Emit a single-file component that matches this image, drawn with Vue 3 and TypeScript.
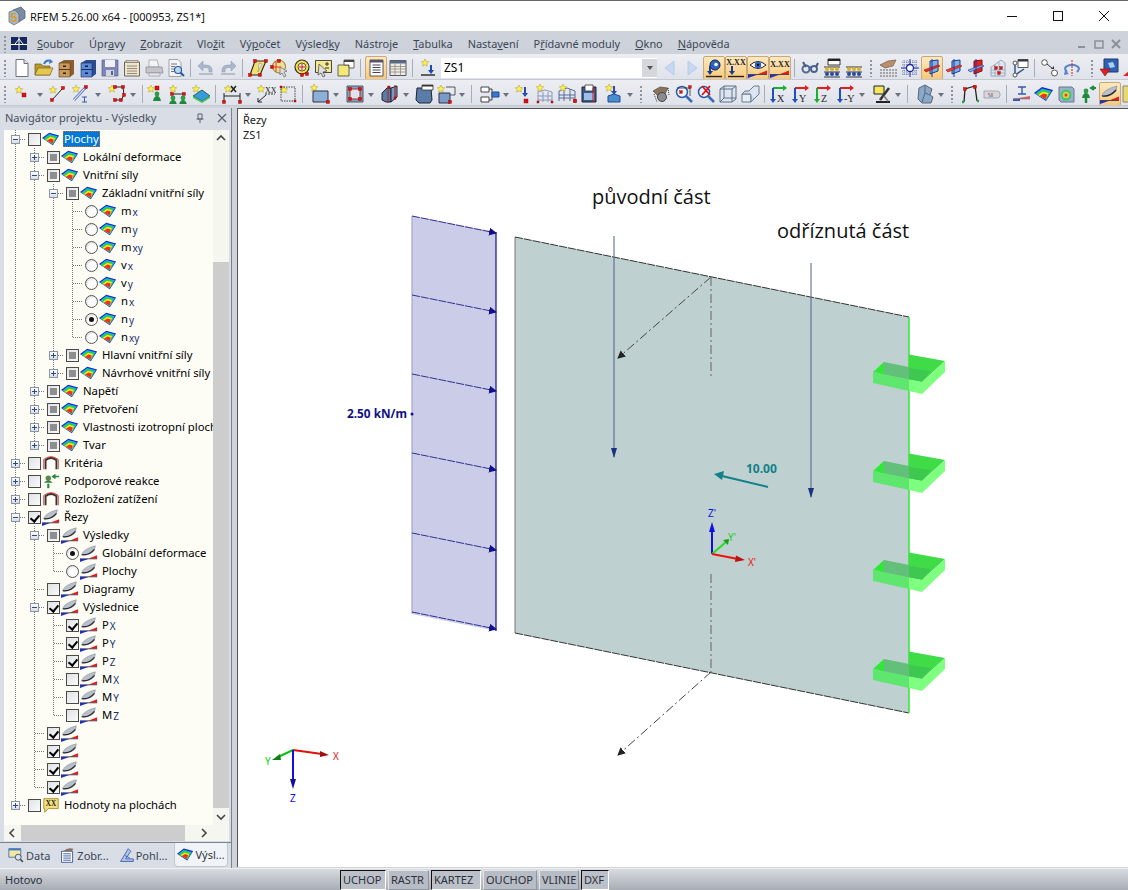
<script setup lang="ts">
type Check = 'none' | 'part' | 'on' | 'radio' | 'radioOn'
interface TreeNode {
  label?: string
  sub?: string
  check: Check
  icon: string
  exp?: '+' | '-'
  selected?: boolean
  children?: TreeNode[]
}
interface FlatRow extends TreeNode {
  trail: boolean[]
  last: boolean
}

// small helpers for the toolbar pictures
const star = (x: number, y: number, r = 4) => {
  let d = ''
  for (let i = 0; i < 10; i++) {
    const a = (Math.PI / 5) * i - Math.PI / 2
    const q = i % 2 ? r * 0.45 : r
    d += `${i ? 'L' : 'M'}${(x + q * Math.cos(a)).toFixed(1)} ${(y + q * Math.sin(a)).toFixed(1)}`
  }
  return `<path d="${d}Z" fill="#fff04a" stroke="#a89a30" stroke-width=".5"/>`
}
const node = (x: number, y: number, s = 3) => `<rect x="${x - s / 2}" y="${y - s / 2}" width="${s}" height="${s}" fill="#e01010" stroke="#800" stroke-width=".4"/>`
const greenMan = (x: number, y: number) => `<circle cx="${x}" cy="${y}" r="2.4" fill="#2f9a4a"/><path d="M${x - 4} ${y + 7}q1-5 ${4}-5q3 0 4 5z" fill="#1f8a3c"/>`
const abacus = `<path d="M2 9h16M2 14h16M2 19h16" stroke="#334" stroke-width="1"/><g fill="#d8b020"><circle cx="5" cy="11" r="2"/><circle cx="10" cy="11" r="2"/><circle cx="15" cy="11" r="2"/></g><g fill="#2a4aa0"><circle cx="5" cy="16" r="2"/><circle cx="10" cy="16" r="2"/><circle cx="15" cy="16" r="2"/></g>`
const planes = (c: string) => `<path d="M8 3l8-1v11l-8 3z" fill="#7fb0e8" stroke="#1a3a9a"/><path d="M2 12l14-5 2 1-14 6z" fill="${c}" stroke="#a01010" stroke-width=".6"/><path d="M10 1v18" stroke="#1a3a9a"/>`
const axisIcon = (l: string, a: string, b: string) => `<path d="M4 4h13" stroke="${a}" stroke-width="2"/><path d="M14 1l4 3-4 3z" fill="${a}"/><path d="M4 4v13" stroke="${b}" stroke-width="2"/><path d="M1 15l3 4 3-4z" fill="${b}"/><text x="8" y="18" font-size="10" font-family="Liberation Serif" fill="#222">${l}</text>`
const wedge = `<path d="M0 16.500h10L0 20z" fill="#2030d0"/><path d="M9 16.500l10-4v4z" fill="#e02020"/><path d="M0 16.500h19" stroke="#334" stroke-width=".8"/>`
const rainbow = `<path d="M0 9L8 3l11 3-7 11z" fill="#1a26c8"/><path d="M1.500 9.500L8 4.500l9.500 2.500-5.500 9z" fill="#10b8e0"/><path d="M2.500 10L8.500 6l7.500 2-4 7.500z" fill="#30d030"/><path d="M4 11L9 7.500l5.500 1.500-2.500 6z" fill="#f0e820"/><path d="M5.500 12L9.500 9.500l3.500 1-1 4.500z" fill="#f03020"/>`

const icons: Record<string, string> = {
  new: `<path d="M4 1.500h8l4 4v13H4z" fill="#fff" stroke="#6a7078"/><path d="M12 1.500v4h4" fill="#e4e8ee" stroke="#6a7078"/>`,
  open: `<path d="M1 17V6h6l2 2h7v9z" fill="#b89a30" stroke="#6a5a18" stroke-width=".7"/><path d="M1 17l3-7h15l-3 7z" fill="#e6c64c" stroke="#7a6820" stroke-width=".7"/><path d="M10 6q2-5 7-3" fill="none" stroke="#3a78c8" stroke-width="2"/><path d="M16 1l3 3-4 2z" fill="#3a78c8"/>`,
  cabBrown: `<path d="M3 5l5-3h10v14l-4 3H3z" fill="#8a6030"/><path d="M3 5h11v14H3z" fill="#c89a5c" stroke="#5a3c18" stroke-width=".6"/><path d="M3 11.500h11" stroke="#5a3c18"/><path d="M7 7.500h3v1.500H7zM7 14.500h3v1.500H7z" fill="#2a1c0c"/>`,
  cabBlue: `<path d="M3 5l5-3h10v14l-4 3H3z" fill="#2c4c90"/><path d="M3 5h11v14H3z" fill="#5a8ad8" stroke="#1a2c60" stroke-width=".6"/><path d="M3 11.500h11" stroke="#1a2c60"/><path d="M7 7.500h3v1.500H7zM7 14.500h3v1.500H7z" fill="#0c1638"/>`,
  save: `<path d="M2 2h16v16H2z" fill="#7d86b8" stroke="#5a6088" stroke-width=".7"/><path d="M5 2h10v7H5z" fill="#f0f0f4"/><path d="M6 12h8v6H6z" fill="#d4d6e0"/><path d="M11 13h2v4h-2z" fill="#5a6088"/>`,
  note: `<path d="M2.500 4h15v14h-15z" fill="#efe4cc" stroke="#6c665a"/><path d="M4 2.500h12v2H4z" fill="#d8d2c2" stroke="#6c665a" stroke-width=".6"/><path d="M5 8h10M5 10.500h10M5 13h10M5 15.500h10" stroke="#7a7264" stroke-width=".8"/>`,
  print: `<path d="M5 2h8l2 7H5z" fill="#f4f4f6" stroke="#8a8c92" stroke-width=".6"/><path d="M2 9h16l1 6H2z" fill="#c4c6cc" stroke="#7a7c84" stroke-width=".6"/><path d="M5 15h11v3H5z" fill="#e8e8ec" stroke="#8a8c92" stroke-width=".6"/>`,
  preview: `<path d="M3 1.500h9l3 3v14H3z" fill="#f4f4f6" stroke="#80848c" stroke-width=".7"/><path d="M5 6h6M5 8.500h4M5 11h4M5 13.500h3" stroke="#777"/><circle cx="12" cy="12" r="3.500" fill="#bcd8f4" stroke="#2a5aa8" stroke-width="1.200"/><path d="M14.500 14.500l3.500 3.500" stroke="#2a5aa8" stroke-width="2"/>`,
  undo: `<path d="M3 15h14v2H3z" fill="#b8bcc8"/><path d="M16 14v-3q-1-4-6-4H7V3L2 8l5 5V9.500h3q3 0 3 2.500v2z" fill="#a8b8d0" stroke="#8a94a8" stroke-width=".5"/>`,
  redo: `<path d="M3 15h14v2H3z" fill="#b8bcc8"/><path d="M4 14v-3q1-4 6-4h3V3l5 5-5 5V9.500h-3q-3 0-3 2.500v2z" fill="#a8b8d0" stroke="#8a94a8" stroke-width=".5"/>`,
  para: `<path d="M7 3h11l-6 14H2z" fill="#f4e070" stroke="#222" stroke-width="1.100"/><path d="M11 5l3 1-4 8z" fill="#eee" stroke="#777" stroke-width=".5"/>${node(7, 3)}${node(18, 3)}${node(12, 17)}${node(2, 17)}`,
  lens1: `<circle cx="9" cy="8.500" r="6.500" fill="#f2dc90" stroke="#8c7a30"/><path d="M1 9h10M6 3v11" stroke="#e01010" stroke-width=".8"/>${node(2, 9)}${node(9, 3)}<path d="M10 9l7 4-3 1 2 4-2 1-2-4-2 2z" fill="#ddd" stroke="#555" stroke-width=".6"/>`,
  lens2: `<circle cx="10" cy="9" r="7" fill="#f4e040" stroke="#333" stroke-width="1.200"/><circle cx="10" cy="9" r="4" fill="#f6f0d0" stroke="#333" stroke-width=".8"/><path d="M7 9h6M10 6v6" stroke="#e01010"/>${node(10, 17)}${node(15, 16)}`,
  boxCur: `<path d="M1.500 2.500h16v12h-16z" fill="#f4e890" stroke="#222" stroke-width=".8"/><path d="M11 6h4M13 4v4M11 10h4" stroke="#333"/><path d="M5 6l8 7-4 1 2 4-2 1-2-4-3 2z" fill="#ddd" stroke="#444" stroke-width=".7"/>`,
  winY: `<path d="M2 7h11v11H2z" fill="#f6e878" stroke="#444" stroke-width=".8"/><path d="M8 2h10v8h-5V7H8z" fill="#fff" stroke="#444" stroke-width=".8"/><path d="M8 2h10v2H8z" fill="#444"/>`,
  list: `<path d="M4 2h13v16H4z" fill="#fff" stroke="#445" stroke-width=".9"/><path d="M4 2h13v2.500H4z" fill="#556"/><path d="M6.500 7h8M6.500 9.500h8M6.500 12h8M6.500 14.500h8" stroke="#445"/>`,
  table: `<path d="M2 2.500h16v15H2z" fill="#f0ece0" stroke="#556"/><path d="M2 2.500h16v3H2z" fill="#5a6a84"/><path d="M2 8.500h16M2 11h16M2 14h16M7 5.500v12M12.500 5.500v12" stroke="#8a8a88" stroke-width=".8"/>`,
  starDown: `${star(7, 5)}<path d="M13 7v7" stroke="#1a4ab0" stroke-width="2"/><path d="M10 12l3 4 3-4z" fill="#1a4ab0"/><path d="M3 17h14" stroke="#333" stroke-width="1.500"/>`,
  prev: `<path d="M14 3v14L5 10z" fill="#c8d8f4" stroke="#a8bce0" stroke-width=".6"/>`,
  next: `<path d="M6 3v14l9-7z" fill="#c8d8f4" stroke="#a8bce0" stroke-width=".6"/>`,
  pinEye: `<circle cx="11" cy="7" r="5" fill="#2a62c8" stroke="#123"/><circle cx="12" cy="6.500" r="1.800" fill="#fff"/><path d="M6 8v7" stroke="#1a3a9a" stroke-width="2"/><path d="M3 13l3 4 3-4z" fill="#1a3a9a"/><path d="M2 18.500h16" stroke="#222" stroke-width="1.400"/>`,
  xxDown: `<text x="10" y="7" text-anchor="middle" font-size="8" font-weight="700" font-family="Liberation Serif" fill="#222">X.XX</text><path d="M6 8v7" stroke="#1a3a9a" stroke-width="2"/><path d="M3 13l3 4 3-4z" fill="#1a3a9a"/><path d="M2 18.500h16" stroke="#222" stroke-width="1.400"/>`,
  eye: `<path d="M2 7q8-7 16 0q-8 7-16 0z" fill="#fff" stroke="#223"/><circle cx="10" cy="7" r="3.200" fill="#2a62c8"/><circle cx="10" cy="7" r="1.200" fill="#000"/>${wedge}`,
  xxWedge: `<text x="10" y="9" text-anchor="middle" font-size="8" font-weight="700" font-family="Liberation Serif" fill="#222">X.XX</text>${wedge}`,
  chain: `<circle cx="6" cy="11" r="3.500" fill="none" stroke="#506a90" stroke-width="2"/><path d="M9 9l3 1" stroke="#506a90" stroke-width="2"/><circle cx="14" cy="11" r="3" fill="none" stroke="#48628a" stroke-width="1.800"/><path d="M3 4l3 5M18 5l-2 4" stroke="#4a5a78" stroke-width="2"/>`,
  abaWin: `${abacus}<path d="M6 1h12v6H6z" fill="#fff" stroke="#222" stroke-width=".9"/><path d="M6 1h12v2H6z" fill="#222"/>`,
  aba: abacus,
  handGrid: `<path d="M2 7l8-4 8-1-3 6-8 2z" fill="#b8906c" stroke="#664c34" stroke-width=".6"/><g fill="#333"><circle cx="3" cy="12" r=".7"/><circle cx="6" cy="12" r=".7"/><circle cx="9" cy="12" r=".7"/><circle cx="12" cy="12" r=".7"/><circle cx="15" cy="12" r=".7"/><circle cx="18" cy="12" r=".7"/><circle cx="3" cy="15" r=".7"/><circle cx="6" cy="15" r=".7"/><circle cx="9" cy="15" r=".7"/><circle cx="12" cy="15" r=".7"/><circle cx="15" cy="15" r=".7"/><circle cx="18" cy="15" r=".7"/><circle cx="3" cy="18" r=".7"/><circle cx="6" cy="18" r=".7"/><circle cx="9" cy="18" r=".7"/><circle cx="12" cy="18" r=".7"/><circle cx="15" cy="18" r=".7"/><circle cx="18" cy="18" r=".7"/></g>`,
  target: `<path d="M2 4h16M2 7h16M2 13h16M2 16h16M4 2v16M7 2v16M13 2v16M16 2v16" stroke="#3a50a8" stroke-width=".7" stroke-dasharray="1 1"/><path d="M10 1v18M1 10h18" stroke="#1a2a98"/><circle cx="10" cy="10" r="3.500" fill="#fff" stroke="#1a2a98" stroke-width="1.300"/>`,
  planeA: planes('#e03020'),
  planeB: planes('#f04030'),
  planeC: `<path d="M8 3l8-1v11l-8 3z" fill="#e82020" stroke="#7a1010"/><path d="M2 12l14-5 2 1-14 6z" fill="#7fb0e8" stroke="#1a3a9a" stroke-width=".6"/><path d="M10 1v18" stroke="#1a3a9a"/>`,
  gridPink: `<path d="M5 8l8-6 4 3v13H3V9z" fill="#dce6f0" stroke="#8a98ac" stroke-width=".8"/><path d="M3 12h14M3 15h14M7 6v12M11 4v14" stroke="#8a98ac" stroke-width=".6"/>${node(8, 10, 2.500)}${node(13, 10, 2.500)}${node(11, 15, 2.500)}`,
  pathWin: `<path d="M5 5v12M5 17l9-6" stroke="#28508a" stroke-width="1.400"/><circle cx="5" cy="5" r="2" fill="#fff" stroke="#555"/><circle cx="5" cy="17" r="2" fill="#fff" stroke="#555"/><path d="M8 1.500h10v8H8z" fill="#fff" stroke="#333" stroke-width=".8"/><path d="M8 1.500h10v2H8z" fill="#334"/>`,
  circArrow: `<circle cx="4.500" cy="4.500" r="2.800" fill="#fff" stroke="#555"/><circle cx="14.500" cy="15" r="3" fill="#fff" stroke="#555"/><path d="M7 6l6 5" stroke="#333"/><path d="M11 11h3v-3z" fill="#333"/>`,
  rotate: `<path d="M5 14q-5-5 3-7h4q8 2 3 7" fill="none" stroke="#5a86c8" stroke-width="2"/><path d="M3 12l4 4-5 1z" fill="#5a86c8"/><path d="M10 2v16" stroke="#d02020" stroke-dasharray="2 1"/>`,
  blueBox: `<path d="M5 1h14v13H5z" fill="#3060b0" stroke="#1a3a70"/><path d="M9 5l5-1 2 5-5 1z" fill="#a8d0f4"/><path d="M1 11h10l-5 7z" fill="#e02020" stroke="#801010" stroke-width=".6"/>`,
  redEdge: `<path d="M2 18l7-6v6z" fill="#e02020"/>`,
  starNode: `${star(7, 6)}${node(12, 11, 4)}`,
  line: `${star(6, 6)}<path d="M5 16L16 4" stroke="#222"/>${node(5, 16)}${node(16, 4)}`,
  member: `${star(5, 5)}<path d="M3 16L15 3" stroke="#6a88c8" stroke-width="3"/><path d="M3 16L15 3" stroke="#fff" stroke-width="1"/>${node(15, 3)}<path d="M11 13h5M13.500 13v5M11 18h5" stroke="#3a5aa8"/>`,
  poly: `${star(5, 5)}<path d="M8 3h8l1 8-3 5H8" fill="none" stroke="#222"/>${node(8, 3)}${node(16, 3)}${node(17, 11)}${node(14, 16)}${node(8, 16)}`,
  support: `${star(5, 5)}${node(11, 4, 4)}${greenMan(11, 10)}`,
  support2: `${star(5, 5)}<path d="M4 10h13" stroke="#222"/>${node(4, 10)}${node(16, 10)}${greenMan(5, 14)}${greenMan(15, 14)}`,
  foundation: `${star(5, 5)}<path d="M2 12l9-6 8 6-8 5z" fill="#3a9ae0" stroke="#1a6a50"/><path d="M2 12v2l9 5 8-5v-2l-8 5z" fill="#4ac060"/>`,
  dim: `${star(6, 5)}<path d="M9 2l5 6M14 2L9 8" stroke="#222" stroke-width="1.500"/><path d="M2 9v9M18 9v9M2 12h16" stroke="#222"/>${node(2, 18)}${node(18, 18)}`,
  labelXX: `${star(5, 5)}<text x="9" y="9" font-size="8" font-family="Liberation Serif" fill="#222">XX</text><path d="M9 10h10" stroke="#333" stroke-dasharray="2 1"/><path d="M2 18l8-7M2 18v-4M2 18h4" stroke="#222"/>`,
  dotBox: `${star(6, 6)}<path d="M3 3h14v14H3z" fill="none" stroke="#444" stroke-dasharray="1.500 1"/>${node(3, 3, 2)}${node(17, 17, 2)}`,
  surface: `${star(4, 4)}<path d="M3 7h15v11H3z" fill="#8cb0d8" stroke="#334"/>${node(18, 18)}`,
  surfaceRed: `<path d="M2 2h16v16H2z" fill="#88a0b8" stroke="#4a5a70"/><path d="M5 5h10v10H5z" fill="#e0e4ea" stroke="#a03030"/>${node(5, 5)}${node(15, 5)}${node(5, 15)}${node(15, 15)}`,
  solidSet: `<path d="M2 9l5-5h4v14H6l-4-2z" fill="#5a7aa8" stroke="#223"/><path d="M11 4l6-2v11l-6 5z" fill="#7a9ac8" stroke="#223"/><path d="M8 2v17M15 1v15" stroke="#a03030" stroke-width="1.200"/>${node(9, 3, 2)}${node(15, 14, 2)}`,
  cube: `<path d="M3 4h14l1 12-2 3H5l-3-3z" fill="#5a7ca8" stroke="#223"/><path d="M8 1h11v5H8z" fill="#fff" stroke="#333" stroke-width=".8"/><path d="M8 1h11v1.500H8z" fill="#334"/>`,
  cubeStar: `${star(5, 5)}<path d="M3 9h11v10H3z" fill="#7a9cc8" stroke="#334"/><path d="M10 3h9v8h-5" fill="none" stroke="#556"/>${node(14, 18)}`,
  sockets: `<path d="M1 3h8v5H1zM1 13h8v5H1z" fill="#fff" stroke="#444"/><path d="M9 5h3v11H9" fill="none" stroke="#444"/><path d="M12 8h7v5h-7z" fill="#3a78d0" stroke="#234a90"/>`,
  starDownRed: `${star(6, 5)}<path d="M12 3v9" stroke="#2a4ab0" stroke-width="2"/><path d="M9 9l3 4 3-4z" fill="#2a4ab0"/>${node(13, 17, 4)}`,
  frame: `${star(5, 4)}<path d="M3 18V8l7-2 7 2v10M3 12h14M3 16h14M8 8v10M13 8v10" fill="none" stroke="#8a9ab8"/>${node(3, 18, 2)}${node(17, 18, 2)}`,
  frameRed: `<path d="M2 17V7l8-3 8 3v10M2 11h16M2 14h16M7 6v11M13 5v12" fill="none" stroke="#5a6a98"/>${star(6, 4)}${node(18, 17, 3.500)}`,
  block: `<path d="M3 3h14v15H3z" fill="#3a5a98" stroke="#222"/><path d="M6 1h8v6H6z" fill="#fff" stroke="#333" stroke-width=".8"/><path d="M5 9h10v7H5z" fill="#9ac0e8"/><path d="M14 4v14" stroke="#e01010"/>`,
  waterBlock: `${star(5, 4)}<path d="M10 2v7" stroke="#2a4ab0" stroke-width="2"/><path d="M7 7l3 4 3-4z" fill="#2a4ab0"/><path d="M4 12l6-2 6 2v6H4z" fill="#4a8cd0" stroke="#234a90"/>`,
  handBall: `<path d="M2 7l7-4 8 1-3 6-7 2z" fill="#8a7260" stroke="#4a3c2c" stroke-width=".6"/><circle cx="11" cy="13" r="4.500" fill="#8a8c90" stroke="#444"/><path d="M3 10l3 8M17 4l1 7" stroke="#333" stroke-dasharray="1 1"/>`,
  zoomRed: `<circle cx="8" cy="8" r="5.500" fill="#eef4fc" stroke="#2a5aa8" stroke-width="1.500"/><path d="M12 12l6 6" stroke="#3a6ab8" stroke-width="2.500"/><path d="M3 4h13v8" fill="none" stroke="#333" stroke-width=".8"/>${node(16, 3, 2.500)}${node(7, 8, 2.500)}`,
  zoomX: `<circle cx="8" cy="8" r="5.500" fill="#eef4fc" stroke="#2a5aa8" stroke-width="1.500"/><path d="M12 12l6 6" stroke="#3a6ab8" stroke-width="2.500"/><path d="M6 2l8 9M14 2l-8 9" stroke="#e01010" stroke-width="1.800"/>`,
  wire: `<path d="M2 5l4-3h12v13l-4 3H2z" fill="#dbe6f0" stroke="#607088"/><path d="M2 5h12v13M14 5l4-3M6 2v12H18M6 14l-4 4" fill="none" stroke="#607088"/>`,
  cubes: `<path d="M2 10h9v8H2z" fill="#e8eef6" stroke="#6a7a90"/><path d="M2 10l3-3h9l-3 3zM11 10l3-3v8l-3 3z" fill="#cddae8" stroke="#6a7a90"/><path d="M9 7l5-5h5v8l-5 5" fill="#dde6f0" stroke="#6a7a90"/>`,
  axX: axisIcon('X', '#18b030', '#2050c0'),
  axY: axisIcon('Y', '#e02020', '#2050c0'),
  axZ: axisIcon('Z', '#e02020', '#18b030'),
  axNY: axisIcon('-Y', '#e02020', '#2050c0'),
  scope: `<path d="M2 2h10v8H2z" fill="#f4e860" stroke="#222"/><path d="M8 16l9-12" stroke="#333" stroke-width="2.500"/><path d="M4 18h14" stroke="#222" stroke-width="2"/><path d="M12 12l4 5" stroke="#888" stroke-width="2"/>`,
  seat: `<path d="M4 4l6-3 7 4-2 6 3 2-2 6H7L3 15z" fill="#8aa8c8" stroke="#56687c"/><path d="M10 1v8l5 2M10 9l-3 9" fill="none" stroke="#56687c"/>`,
  portal: `<path d="M4 18l1-13 10-3 2 15" fill="none" stroke="#222" stroke-width="1.300"/>${node(5, 5)}${node(15, 3)}<path d="M4 18h-2M17 17h2" stroke="#18b030" stroke-width="2.500"/>`,
  pill: `<path d="M2 7h13a3 3 0 0 1 3 3v1a3 3 0 0 1-3 3H2z" fill="#d4d6da" stroke="#a8aab0"/><path d="M6 10h2M9 10h2" stroke="#c04040"/><path d="M7 12h4" stroke="#3a78d0"/>`,
  wedgeI: `<path d="M6 3h8M10 3v7M6 10h8" stroke="#3a5aa8" stroke-width="1.400"/><path d="M1 15l17-3v3z" fill="#e06060"/><path d="M1 15h7v2H1z" fill="#3a50c0"/><path d="M1 14.800h17" stroke="#778"/>`,
  rainbowBig: rainbow,
  cubeHeat: `<path d="M3 3h13l2 2v13H5l-2-2z" fill="#9ab0c8" stroke="#667a90"/><circle cx="10" cy="11" r="5.500" fill="#40c870"/><circle cx="10" cy="11" r="3.300" fill="#e0d040"/><circle cx="10" cy="11" r="1.500" fill="#e04030"/>`,
  greenPush: `${greenMan(8, 7)}<path d="M13 4h5M16 2l-3 2 3 2" fill="none" stroke="#1f8a3c" stroke-width="2"/><path d="M8 14v5" stroke="#1f8a3c" stroke-width="2.500"/>`,
  sect: `<path d="M2 11q3-6 15-9q0 6-4 8-5 3-11 2z" fill="#b8c0cc" stroke="#707884" stroke-width=".5"/><path d="M2 12q8 1 14-6" fill="none" stroke="#222" stroke-width="1.200"/>${wedge}`,
  yellowEnd: `<path d="M1 2h7v16H1z" fill="#e8d870" stroke="#887"/>`,
}

// tree pictures
const treeIcons: Record<string, string> = {
  surf: rainbow,
  sect: icons.sect,
  arch: `<path d="M4 17V7q6-5 12 0v10" fill="none" stroke="#333" stroke-width="2"/><path d="M2 17V6q8-6 16 0v11" fill="none" stroke="#d02020" stroke-width="1"/>`,
  reac: `<circle cx="7" cy="7" r="3" fill="#5a8a50"/><path d="M2 12q5-5 10 0z" fill="#3a7a40"/><path d="M13 5h6M15 3l-3 2 3 2" fill="none" stroke="#2a8a3c" stroke-width="1.800"/><path d="M7 13v5" stroke="#2a8a3c" stroke-width="2.400"/>`,
  xx: `<path d="M2 3h16v11H7l-4 4v-4H2z" fill="#f6e07c" stroke="#a08a30"/><text x="10" y="11.500" text-anchor="middle" font-size="8" font-weight="700" font-family="Liberation Serif" fill="#222">XX</text>`,
}

const row1: (string | number)[] = [
  ':', 'new', 'open', 'cabBrown', 'cabBlue', 'save', 'note', 'print', 'preview', '|', 2, 'undo', 'redo', '|', 2,
  'para', 'lens1', 'lens2', 'boxCur', 'winY', '|', 2, '!list', 'table', '|', 2, 'starDown', 'combo', 2,
  'prev', 'next', '!pinEye', '!xxDown', '!eye', '!xxWedge', '|', 2, 'chain', 'abaWin', 'aba', 4, ':',
  'handGrid', 'target', '!planeA', 'planeB', 'planeC', 'gridPink', 'pathWin', '|', 2, 'circArrow', 'rotate', 7, ':', 'blueBox', 'redEdge',
]
const row2: (string | number)[] = [
  ':', 'starNode', 2, 'v', 'line', 2, 'member', 1, 'v', 2, 'poly', 'v', '|', 'support', 'support2', 1, 'foundation', '|', 3,
  'dim', 'v', 1, 'labelXX', 'dotBox', '|', 4, 'surface', 'v', 2, 'surfaceRed', 'v', 2, 'solidSet', 'v', 1, 'cube', 'cubeStar', 'v', '|', 5,
  'sockets', 'v', 'starDownRed', 'frame', 'frameRed', 'block', 3, 'waterBlock', 'v', 3, ':', 3, 'handBall', 1, 'zoomRed', 'zoomX', 'wire', 'cubes', '|', 1,
  'axX', 'axY', 'axZ', 1, 'axNY', 'v', 3, 'scope', 'v', '|', 4, 'seat', 'v', 3, ':', 1, 'portal', 'pill', '|', 2,
  'wedgeI', 'rainbowBig', 'cubeHeat', 'greenPush', '!sect', 'yellowEnd',
]

const menus = [
  ['', 'S', 'oubor'], ['Úpr', 'a', 'vy'], ['', 'Z', 'obrazit'], ['Vlo', 'ž', 'it'], ['Vý', 'p', 'očet'], ['Výsled', 'k', 'y'],
  ['Nástro', 'j', 'e'], ['', 'T', 'abulka'], ['Nasta', 'v', 'ení'], ['P', 'ř', 'ídavné moduly'], ['', 'O', 'kno'], ['', 'N', 'ápověda'],
]

const radio = (sub: string, on = false): TreeNode => ({ label: sub[0], sub: sub.slice(1), check: on ? 'radioOn' : 'radio', icon: 'surf' })
const res = (label: string, sub: string, on: boolean): TreeNode => ({ label, sub, check: on ? 'on' : 'none', icon: 'sect' })

const tree: TreeNode[] = [
  {
    label: 'Plochy', check: 'none', icon: 'surf', exp: '-', selected: true,
    children: [
      { label: 'Lokální deformace', check: 'part', icon: 'surf', exp: '+' },
      {
        label: 'Vnitřní síly', check: 'part', icon: 'surf', exp: '-',
        children: [
          {
            label: 'Základní vnitřní síly', check: 'part', icon: 'surf', exp: '-',
            children: [radio('mx'), radio('my'), radio('mxy'), radio('vx'), radio('vy'), radio('nx'), radio('ny', true), radio('nxy')],
          },
          { label: 'Hlavní vnitřní síly', check: 'part', icon: 'surf', exp: '+' },
          { label: 'Návrhové vnitřní síly', check: 'part', icon: 'surf', exp: '+' },
        ],
      },
      { label: 'Napětí', check: 'part', icon: 'surf', exp: '+' },
      { label: 'Přetvoření', check: 'part', icon: 'surf', exp: '+' },
      { label: 'Vlastnosti izotropní plochy', check: 'part', icon: 'surf', exp: '+' },
      { label: 'Tvar', check: 'part', icon: 'surf', exp: '+' },
    ],
  },
  { label: 'Kritéria', check: 'none', icon: 'arch', exp: '+' },
  { label: 'Podporové reakce', check: 'none', icon: 'reac', exp: '+' },
  { label: 'Rozložení zatížení', check: 'none', icon: 'arch', exp: '+' },
  {
    label: 'Řezy', check: 'on', icon: 'sect', exp: '-',
    children: [
      {
        label: 'Výsledky', check: 'part', icon: 'sect', exp: '-',
        children: [
          { label: 'Globální deformace', check: 'radioOn', icon: 'sect' },
          { label: 'Plochy', check: 'radio', icon: 'sect' },
        ],
      },
      { label: 'Diagramy', check: 'none', icon: 'sect' },
      {
        label: 'Výslednice', check: 'on', icon: 'sect', exp: '-',
        children: [res('P', 'X', true), res('P', 'Y', true), res('P', 'Z', true), res('M', 'X', false), res('M', 'Y', false), res('M', 'Z', false)],
      },
      { check: 'on', icon: 'sect' },
      { check: 'on', icon: 'sect' },
      { check: 'on', icon: 'sect' },
      { check: 'on', icon: 'sect' },
    ],
  },
  { label: 'Hodnoty na plochách', check: 'none', icon: 'xx', exp: '+' },
]

const flatten = (nodes: TreeNode[], trail: boolean[] = []): FlatRow[] =>
  nodes.flatMap((n, i) => {
    const last = i === nodes.length - 1
    return [{ ...n, trail, last }, ...flatten(n.children ?? [], [...trail, !last])]
  })
const rows = flatten(tree)

const tabs = [
  { label: 'Data', icon: `<path d="M1 2h14v10H1z" fill="#f4e8a0" stroke="#3a6ab0"/><path d="M1 2h14v2H1z" fill="#3a78c8"/><circle cx="12" cy="12" r="3.500" fill="#cfe2f6" stroke="#444"/><path d="M14.500 14.500l3 3" stroke="#444" stroke-width="1.800"/>` },
  { label: 'Zobr...', icon: `<path d="M3 5h13v13H3z" fill="#fff" stroke="#2a4a90"/><path d="M5 8h9M5 10.500h9M5 13h9M5 15.500h9" stroke="#2a4a90"/><path d="M5 5q5-5 12-3l-2 3z" fill="#8a7260"/>` },
  { label: 'Pohl...', icon: `<path d="M3 17L12 2l3 3-6 9h9v3z" fill="#b0c4ec" stroke="#3a5aa8"/><path d="M8 10l6 3" stroke="#3a5aa8"/>` },
  { label: 'Výsl...', icon: rainbow, active: true },
]

const boxTops = [0, 99, 198, 297]
const statusBtns = [
  { label: 'UCHOP', on: true, w: 46 }, { label: 'RASTR', on: false, w: 41 }, { label: 'KARTEZ', on: true, w: 50 },
  { label: 'OUCHOP', on: false, w: 54 }, { label: 'VLINIE', on: false, w: 40 }, { label: 'DXF', on: true, w: 28 },
]
const loadArrows = [216, 295, 374, 453, 533, 612]
</script>

<template>
  <div class="app">
    <header class="titlebar">
      <svg class="app-icon" viewBox="0 0 20 20">
        <path d="M7 4l8-3 4 4v7l-6 4z" fill="#7a8ca4" stroke="#45566c" stroke-width=".7" />
        <path d="M3 6l6-2 4 4v8l-5 3-5-3z" fill="#a8b6c6" stroke="#5a6878" stroke-width=".7" />
        <text x="8" y="16" text-anchor="middle" font-size="12" font-weight="700" font-family="Liberation Sans" fill="#d8a020">5</text>
      </svg>
      <span class="title-text">RFEM 5.26.00 x64 - [000953, ZS1*]</span>
      <div class="win-btns">
        <svg viewBox="0 0 46 30"><path d="M18 15.500h10" stroke="#111" /></svg>
        <svg viewBox="0 0 46 30"><rect x="18.500" y="10.500" width="9" height="9" fill="none" stroke="#111" /></svg>
        <svg viewBox="0 0 46 30"><path d="M18 10l10 10M28 10L18 20" stroke="#111" /></svg>
      </div>
    </header>

    <nav class="menubar">
      <span class="grip" />
      <svg class="rf-logo" viewBox="0 0 16 13">
        <rect width="16" height="13" fill="#17295c" />
        <path d="M0 7.500h16M8 0v13M4 7l4-5 4 5" stroke="#fff" fill="none" />
      </svg>
      <div class="menu-items">
        <span v-for="m in menus" :key="m.join('')">{{ m[0] }}<u>{{ m[1] }}</u>{{ m[2] }}</span>
      </div>
      <div class="mdi-btns">
        <svg viewBox="0 0 50 12">
          <path d="M2 9h7" stroke="#8a9099" stroke-width="2" />
          <path d="M19 3h8v7h-8z" fill="none" stroke="#8a9099" stroke-width="1.500" />
          <path d="M36 2l8 8M44 2l-8 8" stroke="#8a9099" stroke-width="2" />
        </svg>
      </div>
    </nav>

    <div v-for="(bar, b) in [row1, row2]" :key="b" class="toolbar">
      <template v-for="(t, i) in bar" :key="i">
        <span v-if="typeof t === 'number'" :style="{ width: t + 'px' }" class="spacer" />
        <span v-else-if="t === ':'" class="grip" />
        <span v-else-if="t === '|'" class="sep" />
        <span v-else-if="t === 'v'" class="drop" />
        <div v-else-if="t === 'combo'" class="combo">
          <span class="combo-text">ZS1</span>
          <span class="combo-arrow"><i class="drop-tri" /></span>
        </div>
        <span v-else class="tool" :class="{ active: t[0] === '!' }">
          <svg viewBox="0 0 20 20" v-html="icons[t.replace('!', '')]" />
        </span>
      </template>
    </div>

    <main class="content">
      <aside class="panel">
        <div class="panel-head">
          <span>Navigátor projektu - Výsledky</span>
          <svg class="pin" viewBox="0 0 10 10"><path d="M3 1h4v5H3zM1.500 6h7M5 6v4" fill="none" stroke="#5a6270" /></svg>
          <svg class="pin close" viewBox="0 0 10 10"><path d="M1 1l8 8M9 1L1 9" stroke="#5a6270" stroke-width="1.200" /></svg>
        </div>
        <div class="tree-wrap">
          <div class="tree">
            <div v-for="(r, i) in rows" :key="i" class="row">
              <span v-for="(g, j) in r.trail" :key="j" class="cell" :class="{ line: g }" />
              <span class="cell elbow" :class="{ 'line-half': r.last, line: !r.last }">
                <i v-if="r.exp" class="exp" :class="{ plus: r.exp === '+' }" />
              </span>
              <span class="check" :class="r.check" />
              <svg class="tree-icon" viewBox="0 0 20 20" v-html="treeIcons[r.icon]" />
              <span v-if="r.label" class="label" :class="{ selected: r.selected }">{{ r.label }}<small v-if="r.sub">{{ r.sub }}</small></span>
            </div>
          </div>
          <div class="vscroll">
            <svg class="arrow-btn" viewBox="0 0 16 17"><path d="M4 10l4-4 4 4" fill="none" stroke="#444" stroke-width="1.600" /></svg>
            <span class="vtrack"><span class="vthumb" /></span>
            <svg class="arrow-btn" viewBox="0 0 16 17"><path d="M4 7l4 4 4-4" fill="none" stroke="#444" stroke-width="1.600" /></svg>
          </div>
        </div>
        <div class="hscroll">
          <svg viewBox="0 0 8 10"><path d="M6 1L2 5l4 4" fill="none" stroke="#444" stroke-width="1.600" /></svg>
          <span class="hthumb" />
          <svg viewBox="0 0 8 10"><path d="M2 1l4 4-4 4" fill="none" stroke="#444" stroke-width="1.600" /></svg>
        </div>
        <div class="tabs">
          <span v-for="t in tabs" :key="t.label" class="tab" :class="{ active: t.active }">
            <svg viewBox="0 0 20 20" v-html="t.icon" />{{ t.label }}
          </span>
        </div>
      </aside>

      <section class="canvas">
        <svg class="scene" viewBox="238 108 890 759" preserveAspectRatio="xMinYMin">
          <defs>
            <marker id="navy" markerWidth="8" markerHeight="8" refX="7" refY="4" orient="auto" markerUnits="userSpaceOnUse">
              <path d="M0 0L8 4 0 8z" fill="#10108a" />
            </marker>
            <marker id="black" markerWidth="8" markerHeight="8" refX="7" refY="4" orient="auto" markerUnits="userSpaceOnUse">
              <path d="M0 0L8 4 0 8z" fill="#222" />
            </marker>
            <marker id="cut" markerWidth="10" markerHeight="6" refX="9" refY="3" orient="auto" markerUnits="userSpaceOnUse">
              <path d="M0 0L10 3 0 6z" fill="#203080" />
            </marker>
          </defs>

          <text x="243" y="124" class="view-label">Řezy</text>
          <text x="243" y="139" class="view-label">ZS1</text>

          <!-- load on the left edge -->
          <path d="M412 216L496 232V631L412 614Z" fill="#cbcde8" />
          <path d="M412 216V614" stroke="#a4a6d4" stroke-width="1.200" />
          <path d="M496 232V631" stroke="#10108a" stroke-width="1.200" />
          <path v-for="y in loadArrows" :key="y" :d="`M412 ${y}L496 ${y + 17}`" stroke="#30308f" stroke-dasharray="8 1" marker-end="url(#navy)" />
          <circle cx="412" cy="414" r="1.500" fill="#10108a" />
          <text x="347" y="418" class="load-text">2.50 kN/m</text>

          <!-- plate -->
          <path d="M515 237L909 317V713L515 633Z" fill="#bfd0d0" />
          <path d="M515 633V237" stroke="#777" />
          <path d="M515 237L909 317" stroke="#333" stroke-dasharray="8 1" />
          <path d="M515 633L909 713" stroke="#333" stroke-dasharray="8 1" />
          <path d="M909 317V713" stroke="#30e838" stroke-width="1.500" />

          <!-- section plane traces -->
          <path d="M711 277L618 358" stroke="#444" stroke-dasharray="9 3 2 3" marker-end="url(#black)" />
          <path d="M711 277V378M711 574V672" stroke="#777" stroke-width="1.200" stroke-dasharray="9 3 2 3" />
          <path d="M711 672L618 755" stroke="#444" stroke-dasharray="9 3 2 3" marker-end="url(#black)" />

          <!-- callout lines -->
          <path d="M614 236V457" stroke="#50608c" marker-end="url(#cut)" />
          <path d="M811 263V497" stroke="#50608c" marker-end="url(#cut)" />
          <text x="592" y="204" class="note">původní část</text>
          <text x="777" y="238" class="note">odříznutá část</text>

          <!-- resultant -->
          <path d="M768 487L722 476" stroke="#128088" stroke-width="2" />
          <path d="M714 474L724 471L722 480Z" fill="#128088" />
          <text x="746" y="473" class="result">10.00</text>

          <!-- nodal supports -->
          <g v-for="dy in boxTops" :key="dy" :transform="`translate(0 ${dy})`">
            <path d="M909 354.500L945 361L922 382L909 379.500Z" fill="#3fdc48" />
            <path d="M909 368L931 371L922 382L909 379.500Z" fill="#3ec850" />
            <path d="M884 362L909 367V379.500L880 374Z" fill="#63c07a" />
            <path d="M873 372L884 362V374Z" fill="#30e838" />
            <path d="M873 372L909 379.500V391L873 383Z" fill="#5fe66f" />
            <path d="M909 379.500L922 382V394L909 391Z" fill="#7fff80" />
            <path d="M922 382L945 361V372L922 394Z" fill="#7fff80" />
          </g>

          <!-- local axes -->
          <path d="M712 554V530" stroke="#1010e0" stroke-width="2" />
          <path d="M709 532L712 522L715 532Z" fill="#1010e0" />
          <path d="M712 554L726 542" stroke="#20e020" stroke-width="2" />
          <path d="M723 540L729 539L728 545Z" fill="#18a018" />
          <path d="M712 554L738 559" stroke="#f01010" stroke-width="2" />
          <path d="M736 555.500L745 560L735 562Z" fill="#c01010" />
          <text x="708" y="517" class="axis" fill="#1010e0">Z'</text>
          <text x="728" y="541" class="axis" fill="#20d020">Y'</text>
          <text x="748" y="566" class="axis" fill="#f01010">X'</text>

          <!-- global axes -->
          <path d="M293 750L322 754" stroke="#e01010" stroke-width="2" />
          <path d="M320 751L329 755L320 757Z" fill="#a01010" />
          <path d="M293 750L278 757" stroke="#10c010" stroke-width="2" />
          <path d="M280 754L272 760L281 760Z" fill="#108010" />
          <path d="M293 750V780" stroke="#1010e0" stroke-width="2" />
          <path d="M290 779L293 789L296 779Z" fill="#1010a0" />
          <text x="333" y="760" class="axis" fill="#f01010">X</text>
          <text x="265" y="765" class="axis" fill="#20d020">Y</text>
          <text x="290" y="802" class="axis" fill="#1010e0">Z</text>
        </svg>
      </section>
    </main>

    <footer class="statusbar">
      <span class="status-text">Hotovo</span>
      <div class="status-btns">
        <span v-for="s in statusBtns" :key="s.label" class="s-btn" :class="{ on: s.on }" :style="{ width: s.w + 'px' }">{{ s.label }}</span>
      </div>
    </footer>
  </div>
</template>

<style scoped>
.app {
  width: 1128px;
  height: 890px;
  display: flex;
  flex-direction: column;
  overflow: hidden;
  background: #ced3dc;
  font-family: "Noto Sans", "Open Sans", sans-serif;
  font-size: 11px;
  color: #000;
}

.titlebar {
  height: 31px;
  flex: none;
  display: flex;
  align-items: center;
  background: #fff;
  border-top: 1px solid #666;
  box-sizing: border-box;
  padding-left: 6px;
}
.app-icon {
  width: 20px;
  height: 20px;
  margin-right: 4px;
}
.title-text {
  font-size: 11px;
  color: #111;
}
.win-btns {
  margin-left: auto;
  margin-right: 1px;
  display: flex;
}
.win-btns svg {
  width: 46px;
  height: 30px;
}

.menubar {
  height: 23px;
  flex: none;
  display: flex;
  align-items: center;
  padding: 2px 0 0 3px;
  box-sizing: border-box;
  background: #ced2da;
}
.rf-logo {
  width: 16px;
  height: 13px;
}
.menu-items {
  display: flex;
  gap: 15px;
  margin-left: 10px;
  font-size: 10.9px;
  color: #3a4656;
  white-space: nowrap;
}
.mdi-btns {
  margin-left: auto;
  margin-right: 2px;
}
.mdi-btns svg {
  width: 50px;
  height: 12px;
  display: block;
}

.toolbar {
  height: 26px;
  flex: none;
  display: flex;
  align-items: center;
  padding: 2px 0 0 3px;
  background: linear-gradient(#eceef3, #dfe2e9);
  border-bottom: 1px solid #c4c8d0;
  box-sizing: border-box;
  overflow: hidden;
  white-space: nowrap;
}
.grip {
  width: 8px;
  height: 18px;
  flex: none;
  background: radial-gradient(circle at 2px 2px, #8c94a2 1px, transparent 1.2px) 0 0 / 8px 4px;
}
.spacer {
  flex: none;
  height: 1px;
}
.sep {
  width: 6px;
  height: 18px;
  flex: none;
  background: linear-gradient(#a8aeb8, #a8aeb8) center / 1px 100% no-repeat;
}
.drop {
  width: 11px;
  height: 20px;
  flex: none;
  position: relative;
}
.drop::after {
  content: "";
  position: absolute;
  left: 2px;
  top: 9px;
  border: 3.5px solid transparent;
  border-top: 4px solid #6c7280;
  border-bottom: 0;
}
.tool {
  width: 22px;
  height: 24px;
  flex: none;
  display: flex;
  align-items: center;
  justify-content: center;
  box-sizing: border-box;
}
.tool svg {
  width: 20px;
  height: 20px;
}
.tool.active {
  background: linear-gradient(#fde9c0, #fbc978);
  border: 1px solid #c8a878;
  border-radius: 2px;
}
.combo {
  width: 216px;
  height: 20px;
  flex: none;
  margin-left: 2px;
  display: flex;
  align-items: center;
  background: #fff;
}
.combo-text {
  padding-left: 3px;
  font-size: 12px;
  flex: 1;
}
.combo-arrow {
  width: 15px;
  height: 18px;
  display: flex;
  align-items: center;
  justify-content: center;
  background: #d4d7dc;
}
.drop-tri {
  border: 3.5px solid transparent;
  border-top: 4px solid #555;
  border-bottom: 0;
}

.content {
  flex: 1;
  display: flex;
  min-height: 0;
  padding-top: 2px;
}

.panel {
  width: 232px;
  flex: none;
  display: flex;
  flex-direction: column;
  border-right: 1px solid #7c828c;
  box-sizing: border-box;
  background: #d9dde5;
}
.panel-head {
  height: 22px;
  flex: none;
  display: flex;
  align-items: center;
  padding: 0 0 3px 5px;
  box-sizing: border-box;
  color: #46505e;
}
.pin {
  width: 10px;
  height: 10px;
  margin-left: 8px;
}
.panel-head .pin {
  margin-left: auto;
  margin-right: 12px;
}
.panel-head .close {
  margin-left: 0;
  margin-right: 4px;
}
.tree-wrap {
  flex: 1;
  display: flex;
  min-height: 0;
  margin-left: 4px;
  margin-right: 2px;
}
.tree {
  width: 209px;
  flex: none;
  overflow: hidden;
  background: #fdfdf6;
  padding-left: 2px;
  box-sizing: border-box;
}
.row {
  height: 18px;
  display: flex;
  align-items: center;
  white-space: nowrap;
}
.cell {
  width: 19px;
  height: 18px;
  flex: none;
  position: relative;
}
.cell.line {
  background: linear-gradient(#777 50%, transparent 50%) 9px 0 / 1px 2px repeat-y;
}
.cell.line-half {
  background: linear-gradient(#777 50%, transparent 50%) 9px 0 / 1px 2px repeat-y;
  background-clip: content-box;
  padding-bottom: 9px;
  box-sizing: border-box;
}
.cell.elbow::after {
  content: "";
  position: absolute;
  left: 10px;
  top: 9px;
  width: 9px;
  height: 1px;
  background: linear-gradient(90deg, #777 50%, transparent 50%) 0 0 / 2px 1px repeat-x;
}
.exp {
  position: absolute;
  left: 5px;
  top: 5px;
  width: 9px;
  height: 9px;
  box-sizing: border-box;
  border: 1px solid #8a96a4;
  background: linear-gradient(#fff, #d8dde6);
  z-index: 1;
}
.exp::before {
  content: "";
  position: absolute;
  left: 1px;
  top: 3px;
  width: 5px;
  height: 1px;
  background: #2a4a8c;
}
.exp.plus::after {
  content: "";
  position: absolute;
  left: 3px;
  top: 1px;
  width: 1px;
  height: 5px;
  background: #2a4a8c;
}
.check {
  width: 13px;
  height: 13px;
  flex: none;
  margin: 0 2px 0 3px;
  box-sizing: border-box;
  border: 1px solid #4a4a4a;
  background: linear-gradient(135deg, #dfe2e6, #fafafa);
  position: relative;
}
.check.part::after {
  content: "";
  position: absolute;
  inset: 2px;
  background: #8e8e8e;
}
.check.on::after {
  content: "";
  position: absolute;
  left: 3px;
  top: 1px;
  width: 4px;
  height: 7px;
  border: solid #000;
  border-width: 0 2px 2px 0;
  transform: rotate(40deg);
}
.check.radio,
.check.radioOn {
  border-radius: 50%;
  border-color: #555;
  background: radial-gradient(circle at 60% 60%, #fff 40%, #c8c8cc);
}
.check.radioOn::after {
  content: "";
  position: absolute;
  left: 3px;
  top: 3px;
  width: 5px;
  height: 5px;
  border-radius: 50%;
  background: #111;
}
.tree-icon {
  width: 18px;
  height: 18px;
  margin: 0 -1px;
  flex: none;
}
.label {
  margin-left: 5px;
  font-size: 11.3px;
  line-height: 16px;
}
.label.selected {
  margin-left: 4px;
  padding: 0 1px;
  background: #0078d7;
  color: #fff;
  outline: 1px dotted #c86a20;
  outline-offset: -1px;
}
.label small {
  font-size: 10px;
  color: #20306a;
  margin-left: 1px;
  position: relative;
  top: 1px;
}

.vscroll {
  width: 16px;
  flex: none;
  display: flex;
  flex-direction: column;
  background: #f6f6f1;
}
.arrow-btn {
  width: 16px;
  height: 17px;
  flex: none;
}
.vtrack {
  flex: 1;
  display: flex;
  flex-direction: column;
  justify-content: flex-end;
}
.vthumb {
  height: 546px;
  background: #cdcdcd;
}
.hscroll {
  height: 16px;
  flex: none;
  display: flex;
  align-items: center;
  margin: 0 2px 0 4px;
  padding: 0 4px;
  background: #f6f6f1;
}
.hscroll svg {
  width: 8px;
  height: 10px;
  flex: none;
}
.hthumb {
  width: 164px;
  height: 16px;
  margin: 0 15px 0 5px;
  background: #cdcdcd;
}
.tabs {
  height: 26px;
  flex: none;
  display: flex;
  gap: 5px;
  padding: 2px 0 0 6px;
  box-sizing: border-box;
  align-items: flex-start;
  border-top: 1px solid #7c828c;
  margin-top: 1px;
  color: #3a4656;
}
.tab {
  height: 21px;
  display: flex;
  align-items: center;
  white-space: nowrap;
  padding: 0 2px;
  font-size: 11px;
}
.tab svg {
  width: 17px;
  height: 17px;
  margin-right: 1px;
}
.tab.active {
  margin-top: -2px;
  height: 23px;
  background: #f0f4f8;
  border: 1px solid #c0c8d0;
  border-top: 0;
  border-radius: 0 0 4px 4px;
  color: #333;
}

.canvas {
  flex: 1;
  margin-left: 5px;
  margin-bottom: 1px;
  border-left: 1px solid #555;
  border-top: 1px solid #555;
  background: #fff;
  overflow: hidden;
}
.scene {
  width: 890px;
  height: 759px;
  display: block;
  margin-top: -1px;
}
.view-label {
  font-size: 11px;
  font-family: "Noto Sans", sans-serif;
  fill: #222;
}
.load-text {
  font-size: 11.8px;
  font-weight: 700;
  font-family: "Noto Sans", sans-serif;
  fill: #10108a;
}
.note {
  font-size: 20px;
  font-family: "Open Sans", sans-serif;
  fill: #111;
}
.result {
  font-size: 12px;
  font-weight: 700;
  font-family: "Noto Sans", sans-serif;
  fill: #128088;
}
.axis {
  font-size: 10px;
  font-family: "Noto Sans", sans-serif;
}

.statusbar {
  height: 22px;
  flex: none;
  display: flex;
  align-items: center;
  background: linear-gradient(#d8dbe0, #a8adb5);
  border-top: 1px solid #f0f0f0;
  box-sizing: border-box;
  padding-left: 5px;
  color: #2a3240;
  font-size: 11px;
}
.status-text {
  width: 335px;
  flex: none;
}
.status-btns {
  display: flex;
  gap: 2px;
}
.s-btn {
  height: 20px;
  box-sizing: border-box;
  padding-left: 2px;
  line-height: 18px;
  overflow: hidden;
  border: 1px solid;
  border-color: #e4e6ea #9096a0 #9096a0 #e4e6ea;
  background: #b8bcc4;
}
.s-btn.on {
  border-color: #111 #fff #fff #111;
  background: #bcc0c8;
}
</style>
